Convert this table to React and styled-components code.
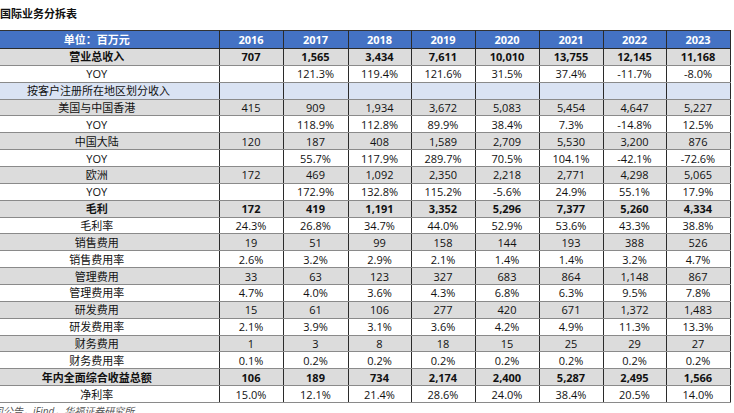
import React from 'react';
import styled, { createGlobalStyle } from 'styled-components';

const GlobalStyle = createGlobalStyle`
  html, body {
    margin: 0;
    padding: 0;
    background: #ffffff;
    overflow: hidden;
  }
  body {
    font-family: "Open Sans", "Noto Sans CJK SC", sans-serif;
    color: #111;
  }
`;

const Page = styled.div`
  width: 734px;
  height: 413px;
  overflow: hidden;
`;

const Title = styled.div`
  height: 30px;
  display: flex;
  align-items: center;
  padding-bottom: 4px;
  box-sizing: border-box;
  font-size: 11px;
  font-weight: 700;
  color: #111;
`;

// the label column runs off the left edge of the picture
const Table = styled.table`
  border-collapse: collapse;
  table-layout: fixed;
  width: 755px;
  margin-left: -25px;
  font-size: 11px;
  line-height: 1;
  border-top: 1px solid #333;
  border-bottom: 1px solid #333;
`;

const Head = styled.th`
  height: 17px;
  background: #4472c4;
  color: #fff;
  font-weight: 700;
  text-align: center;
  padding: 0;
  border-right: 1px solid #2b2b2b;
  border-bottom: 1px solid #2b2b2b;
`;

const toneBg = {
  grey: '#dcdcdc',
  white: '#ffffff',
  blue: '#dae3f3',
};

const Row = styled.tr`
  height: 16.86px;
  background: ${(p) => toneBg[p.$tone]};
  font-weight: ${(p) => (p.$bold ? 700 : 400)};
`;

const Cell = styled.td`
  padding: 0;
  text-align: ${(p) => (p.$indent ? 'left' : 'center')};
  padding-left: ${(p) => (p.$indent ? '52px' : '0')};
  border-right: 1px solid #2b2b2b;
  border-bottom: 1px solid #8a8a8a;
  white-space: nowrap;
  overflow: hidden;
`;

const Source = styled.div`
  margin-top: 0;
  margin-left: -67px;
  font-size: 10px;
  font-style: italic;
  color: #555;
  white-space: nowrap;
`;

const years = ['2016', '2017', '2018', '2019', '2020', '2021', '2022', '2023'];

const rows = [
  { label: '营业总收入', tone: 'grey', bold: true, v: ['707', '1,565', '3,434', '7,611', '10,010', '13,755', '12,145', '11,168'] },
  { label: 'YOY', tone: 'white', v: ['', '121.3%', '119.4%', '121.6%', '31.5%', '37.4%', '-11.7%', '-8.0%'] },
  { label: '按客户注册所在地区划分收入', tone: 'blue', indent: true, v: ['', '', '', '', '', '', '', ''] },
  { label: '美国与中国香港', tone: 'grey', v: ['415', '909', '1,934', '3,672', '5,083', '5,454', '4,647', '5,227'] },
  { label: 'YOY', tone: 'white', v: ['', '118.9%', '112.8%', '89.9%', '38.4%', '7.3%', '-14.8%', '12.5%'] },
  { label: '中国大陆', tone: 'grey', v: ['120', '187', '408', '1,589', '2,709', '5,530', '3,200', '876'] },
  { label: 'YOY', tone: 'white', v: ['', '55.7%', '117.9%', '289.7%', '70.5%', '104.1%', '-42.1%', '-72.6%'] },
  { label: '欧洲', tone: 'grey', v: ['172', '469', '1,092', '2,350', '2,218', '2,771', '4,298', '5,065'] },
  { label: 'YOY', tone: 'white', v: ['', '172.9%', '132.8%', '115.2%', '-5.6%', '24.9%', '55.1%', '17.9%'] },
  { label: '毛利', tone: 'grey', bold: true, v: ['172', '419', '1,191', '3,352', '5,296', '7,377', '5,260', '4,334'] },
  { label: '毛利率', tone: 'white', v: ['24.3%', '26.8%', '34.7%', '44.0%', '52.9%', '53.6%', '43.3%', '38.8%'] },
  { label: '销售费用', tone: 'grey', v: ['19', '51', '99', '158', '144', '193', '388', '526'] },
  { label: '销售费用率', tone: 'white', v: ['2.6%', '3.2%', '2.9%', '2.1%', '1.4%', '1.4%', '3.2%', '4.7%'] },
  { label: '管理费用', tone: 'grey', v: ['33', '63', '123', '327', '683', '864', '1,148', '867'] },
  { label: '管理费用率', tone: 'white', v: ['4.7%', '4.0%', '3.6%', '4.3%', '6.8%', '6.3%', '9.5%', '7.8%'] },
  { label: '研发费用', tone: 'grey', v: ['15', '61', '106', '277', '420', '671', '1,372', '1,483'] },
  { label: '研发费用率', tone: 'white', v: ['2.1%', '3.9%', '3.1%', '3.6%', '4.2%', '4.9%', '11.3%', '13.3%'] },
  { label: '财务费用', tone: 'grey', v: ['1', '3', '8', '18', '15', '25', '29', '27'] },
  { label: '财务费用率', tone: 'white', v: ['0.1%', '0.2%', '0.2%', '0.2%', '0.2%', '0.2%', '0.2%', '0.2%'] },
  { label: '年内全面综合收益总额', tone: 'grey', bold: true, v: ['106', '189', '734', '2,174', '2,400', '5,287', '2,495', '1,566'] },
  { label: '净利率', tone: 'white', v: ['15.0%', '12.1%', '21.4%', '28.6%', '24.0%', '38.4%', '20.5%', '14.0%'] },
];

const colWidths = [244, 64, 65, 63, 64, 64, 64, 63, 64];

const App = () => (
  <Page>
    <GlobalStyle />
    <Title>国际业务分拆表</Title>
    <Table>
      <colgroup>
        {colWidths.map((w, i) => (
          <col key={i} style={{ width: w }} />
        ))}
      </colgroup>
      <thead>
        <tr>
          <Head>单位：百万元</Head>
          {years.map((y) => (
            <Head key={y}>{y}</Head>
          ))}
        </tr>
      </thead>
      <tbody>
        {rows.map((r, i) => (
          <Row key={i} $tone={r.tone} $bold={r.bold}>
            <Cell $indent={r.indent}>{r.label}</Cell>
            {r.v.map((x, j) => (
              <Cell key={j}>{x}</Cell>
            ))}
          </Row>
        ))}
      </tbody>
    </Table>
    <Source>资料来源：公司公告，iFind，华福证券研究所</Source>
  </Page>
);

export default App;
